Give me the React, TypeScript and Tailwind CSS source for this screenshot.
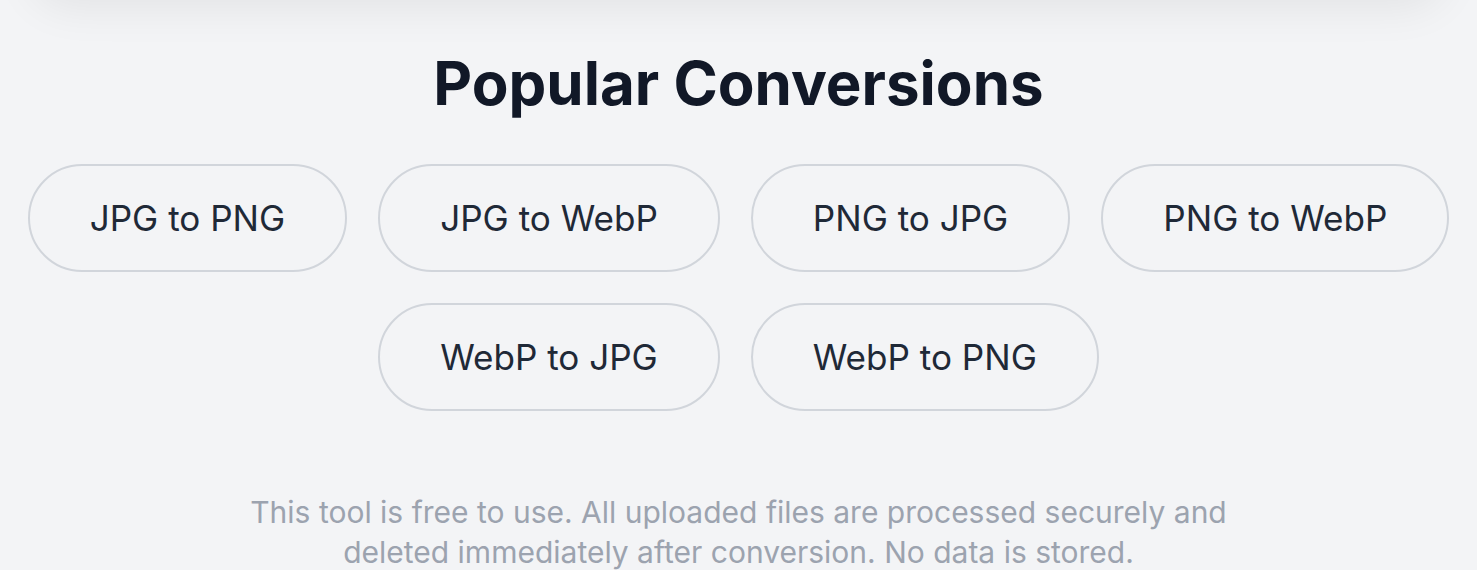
import React from "react";

const items = [
  "JPG to PNG",
  "JPG to WebP",
  "PNG to JPG",
  "PNG to WebP",
  "WebP to JPG",
  "WebP to PNG",
];

export default function App() {
  return (
    <div
      className="min-h-[570px] w-full overflow-hidden bg-[#f3f4f6]"
      style={{ fontFamily: "Inter, 'Noto Sans', sans-serif" }}
    >
      <div className="mx-[30px] -mt-[100px] h-[100px] rounded-b-[40px] bg-[#f3f4f6] shadow-[0_8px_44px_rgba(0,0,0,0.07)]" />
      <div className="flex flex-col items-center pt-[53px]">
        <h2 className="text-[60px] font-bold leading-[60px] text-[#111827]">
          Popular Conversions
        </h2>
        <div className="mt-[51px] flex w-full flex-wrap justify-center gap-[31px] px-[20px]">
          {items.map((t) => (
            <a
              key={t}
              className="rounded-full border-2 border-[#d1d5db] px-[60px] py-[32px] text-[35.1px] leading-[40px] text-[#1f2937]"
            >
              {t}
            </a>
          ))}
        </div>
        <p className="mt-[81px] max-w-[1100px] text-center text-[30px] leading-[40px] text-[#9ca3af]">
          This tool is free to use. All uploaded files are processed securely and
          <br />
          deleted immediately after conversion. No data is stored.
        </p>
      </div>
    </div>
  );
}
